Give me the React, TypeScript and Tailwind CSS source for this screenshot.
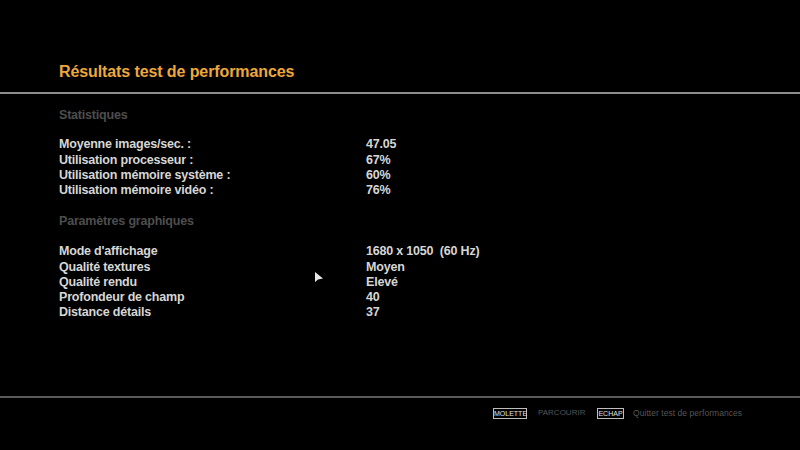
import React from "react";

const stats: [string, string][] = [
  ["Moyenne images/sec. :", "47.05"],
  ["Utilisation processeur :", "67%"],
  ["Utilisation mémoire système :", "60%"],
  ["Utilisation mémoire vidéo :", "76%"],
];

const params: [string, string][] = [
  ["Mode d'affichage", "1680 x 1050  (60 Hz)"],
  ["Qualité textures", "Moyen"],
  ["Qualité rendu", "Elevé"],
  ["Profondeur de champ", "40"],
  ["Distance détails", "37"],
];

function Rows({ rows }: { rows: [string, string][] }) {
  return (
    <div className="flex flex-col">
      {rows.map(([k, v]) => (
        <div key={k} className="flex h-[15.25px] items-center text-[12.5px] font-bold tracking-[-0.2px] text-[#d6d6d6]">
          <div className="w-[307px]">{k}</div>
          <div className="whitespace-pre">{v}</div>
        </div>
      ))}
    </div>
  );
}

export default function App() {
  return (
    <div
      className="relative flex h-[450px] w-[800px] flex-col overflow-hidden bg-black"
      style={{ fontFamily: '"Liberation Sans", Arial, sans-serif' }}
    >
      <div className="h-[92px] pl-[59px] pt-[62px]">
        <div className="text-[16px] font-bold leading-[20px] tracking-[-0.1px] text-[#eca83c]">
          Résultats test de performances
        </div>
      </div>
      <div className="h-[2px] w-full bg-[#8c8c8c]" />
      <div className="flex h-[302px] flex-col pl-[59px] pt-[13px]">
        <div className="h-[16px] text-[12.5px] font-bold leading-[16px] tracking-[-0.2px] text-[#4e4e4e]">Statistiques</div>
        <div className="h-[14px]" />
        <Rows rows={stats} />
        <div className="h-[15px]" />
        <div className="h-[16px] text-[12.5px] font-bold leading-[16px] tracking-[-0.2px] text-[#4e4e4e]">Paramètres graphiques</div>
        <div className="h-[15px]" />
        <Rows rows={params} />
      </div>
      <div className="h-[2px] w-full bg-[#5a5a5a]" />
      <div className="flex items-center pl-[493px] pt-[9px]">
        <span className="w-[34px] border border-[#bdbdbd] text-center text-[7px] leading-[9px] text-[#e0e0e0]">MOLETTE</span>
        <span className="ml-[11px] w-[46px] text-[8px] text-[#555]">PARCOURIR</span>
        <span className="ml-[13px] w-[27px] border border-[#bdbdbd] text-center text-[7px] leading-[9px] text-[#e0e0e0]">ECHAP</span>
        <span className="ml-[9px] text-[8.5px] tracking-[0.05px] text-[#555]">Quitter test de performances</span>
      </div>
      <svg className="absolute left-[315px] top-[272px]" width="9" height="12" viewBox="0 0 9 12">
        <path d="M0 0 L0 10 L3 7.5 L8 6.5 Z" fill="#e8e8e8" />
      </svg>
    </div>
  );
}
